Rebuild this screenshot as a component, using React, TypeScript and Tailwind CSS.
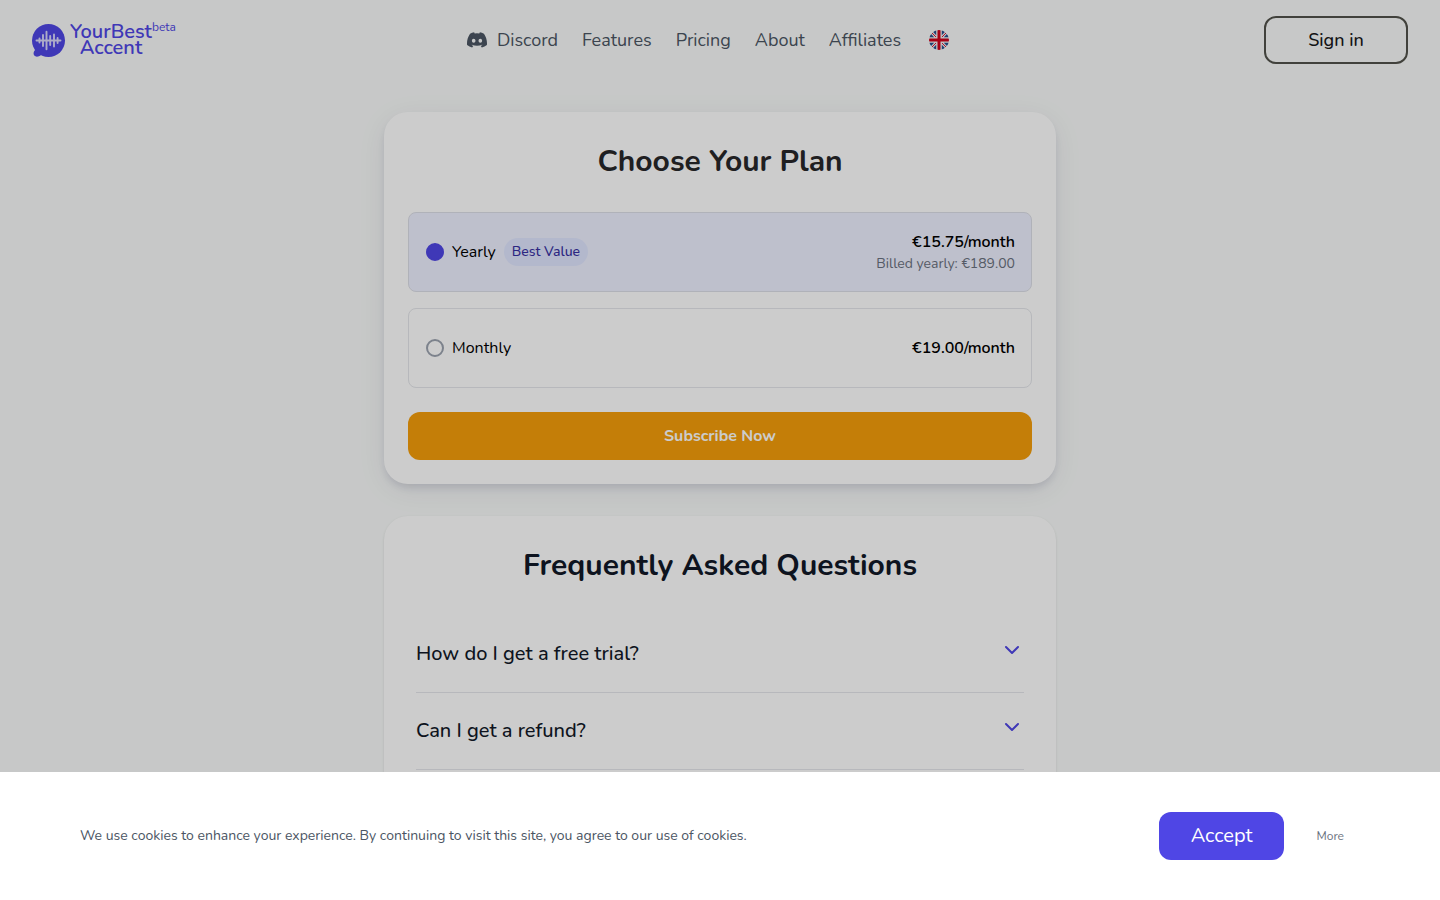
import { useState } from "react";
import { BsDiscord } from "react-icons/bs";

const navLinks = ["Features", "Pricing", "About", "Affiliates"];
const questions = ["How do I get a free trial?", "Can I get a refund?"];

function LogoMark() {
  return (
    <svg viewBox="0 0 34 34" className="size-[34px]" aria-hidden="true">
      <circle cx="16.5" cy="17.5" r="16.5" fill="#4f46e5" />
      <path d="M3 24c.6 2.200-.2 3.400-1 4.600C1 30.500 1.600 33 4 33.600c2.400.3 4.400-1.200 6-1.800z" fill="#4f46e5" />
      <g stroke="#d9d8fb" strokeWidth="1.900" strokeLinecap="round">
        <path d="M4.500 17.500h24M7.500 15.500v4M11 12v11M14.500 8.800v17.400M18.200 13v9M22 11.500v12M25.600 15v5" />
      </g>
    </svg>
  );
}

function FlagIcon() {
  return (
    <svg viewBox="0 0 20 20" className="size-5" aria-hidden="true">
      <clipPath id="flag-round">
        <circle cx="10" cy="10" r="10" />
      </clipPath>
      <g clipPath="url(#flag-round)">
        <path fill="#f0f0f0" d="M0 0h20v20H0z" />
        <path
          fill="#29528f"
          d="M1.600 3.600 5.200 7.200H0zM3.600 1.600 7.200 5.200V0zM16.400 1.600 12.800 5.200V0zM18.400 3.600 14.800 7.200H20zM1.600 16.400 5.200 12.800H0zM3.600 18.400 7.200 14.800V20zM16.400 18.400 12.800 14.800V20zM18.400 16.400 14.800 12.800H20z"
        />
        <path stroke="#d8143a" strokeWidth="1" d="M2 2l5 5M18 2l-5 5M2 18l5-5M18 18l-5-5" />
        <path fill="#d0021b" d="M8.500 0h3v8.500H20v3h-8.500V20h-3v-8.500H0v-3h8.500z" />
      </g>
    </svg>
  );
}

function Chevron() {
  return (
    <svg viewBox="0 0 24 20" className="h-5 w-6 shrink-0" fill="none" aria-hidden="true">
      <path d="M6 7l6 6 6-6" stroke="#4f46e5" strokeWidth="2" strokeLinecap="round" strokeLinejoin="round" />
    </svg>
  );
}

const radioClass =
  "size-[18px] shrink-0 appearance-none rounded-full border-2 border-[#9ca3af] checked:border-[#4f46e5] checked:bg-[#4f46e5]";

export default function App() {
  const [plan, setPlan] = useState("yearly");
  return (
    <div className="flex min-h-screen flex-col bg-[#f9fbfa] font-[Nunito,Lato,sans-serif] text-black">
      <header className="grid h-20 grid-cols-[1fr_auto_1fr] items-center px-8">
        <a href="#" className="flex items-center gap-1 text-[#4f46e5]">
          <LogoMark />
          <span className="flex items-start">
            <span className="text-center text-xl leading-4 font-semibold">
              YourBest
              <br />
              Accent
            </span>
            <span className="text-xs leading-[6px]">beta</span>
          </span>
        </a>
        <nav className="flex items-center gap-6 pr-6 text-lg text-[#4b5563]">
          <a href="#" className="flex items-center gap-2.5">
            <BsDiscord className="size-5" />
            Discord
          </a>
          {navLinks.map((link) => (
            <a href="#" key={link}>
              {link}
            </a>
          ))}
          <button type="button" aria-label="Language" className="pl-1">
            <FlagIcon />
          </button>
        </nav>
        <button
          type="button"
          className="h-12 w-36 justify-self-end rounded-xl border-2 border-[#52524b] text-lg font-medium text-zinc-900"
        >
          Sign in
        </button>
      </header>

      <main className="mx-auto flex w-full max-w-2xl flex-1 flex-col gap-8 pt-8">
        <section className="rounded-3xl bg-white p-6 shadow-[0_6px_30px_rgba(30,27,75,0.07),0_5px_9px_-2px_rgba(30,27,75,0.14)]">
          <h2 className="mb-6 py-2 text-center text-3xl font-bold text-zinc-800">Choose Your Plan</h2>
          <div className="flex flex-col gap-4">
            <label className="flex h-20 items-center justify-between rounded-lg border border-[#dddfe8] pr-4 pl-[17px] has-checked:bg-[#eef0ff]">
              <span className="flex items-center gap-2">
                <input
                  type="radio"
                  name="plan"
                  className={radioClass}
                  checked={plan === "yearly"}
                  onChange={() => setPlan("yearly")}
                />
                Yearly
                <span className="rounded-full bg-[#e0e7ff] px-2 py-1 text-sm font-medium text-[#3730a3]">
                  Best Value
                </span>
              </span>
              <span className="flex flex-col text-right">
                <span className="font-semibold">€15.75/month</span>
                <span className="text-sm text-[#6b7280]">Billed yearly: €189.00</span>
              </span>
            </label>
            <label className="flex h-20 items-center justify-between rounded-lg border border-[#e5e7eb] pr-4 pl-[17px] has-checked:bg-[#eef0ff]">
              <span className="flex items-center gap-2">
                <input
                  type="radio"
                  name="plan"
                  className={radioClass}
                  checked={plan === "monthly"}
                  onChange={() => setPlan("monthly")}
                />
                Monthly
              </span>
              <span className="font-semibold">€19.00/month</span>
            </label>
          </div>
          <button type="button" className="mt-6 h-12 w-full rounded-xl bg-[#f59e0b] font-bold text-white">
            Subscribe Now
          </button>
        </section>

        <section className="flex-1 rounded-t-3xl bg-white px-8 pt-8 shadow-sm">
          <h2 className="mb-8 text-center text-3xl font-bold text-[#111827]">Frequently Asked Questions</h2>
          {questions.map((question) => (
            <button
              type="button"
              key={question}
              className="flex w-full items-start justify-between border-b border-[#e5e7eb] py-6 text-left text-xl font-medium text-[#111827]"
            >
              {question}
              <Chevron />
            </button>
          ))}
        </section>
      </main>

      <div className="fixed inset-0 flex flex-col justify-end bg-black/20">
        <div className="flex h-32 items-center justify-between bg-white px-20">
          <p className="text-sm text-[#4b5563]">
            We use cookies to enhance your experience. By continuing to visit this site, you agree to our use of
            cookies.
          </p>
          <div className="flex items-center gap-4">
            <button type="button" className="h-12 rounded-xl bg-[#4f46e5] px-8 text-xl text-white">
              Accept
            </button>
            <button type="button" className="px-4 text-xs text-[#6b7280]">
              More
            </button>
          </div>
        </div>
      </div>
    </div>
  );
}
